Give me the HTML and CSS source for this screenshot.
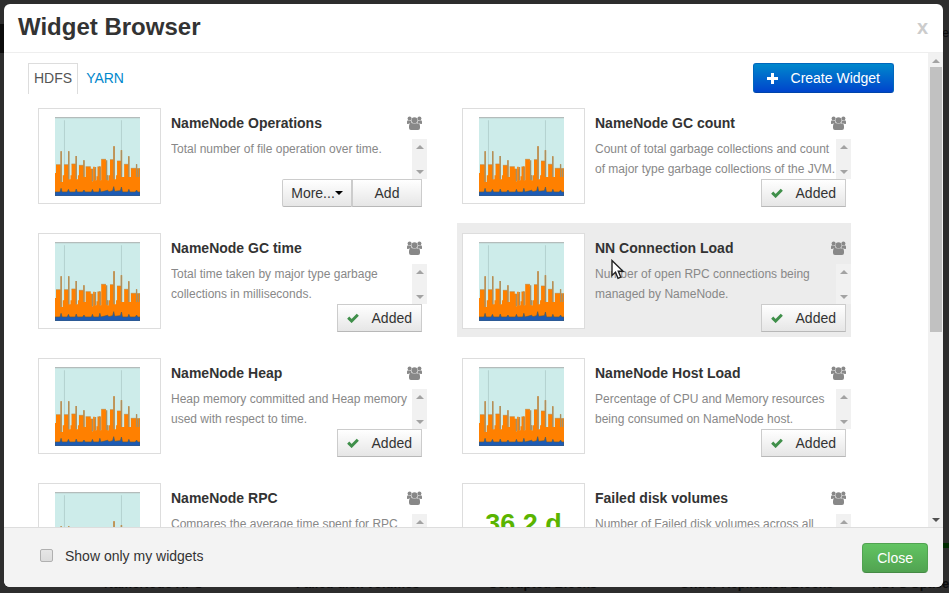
FILE: index.html
```
<!DOCTYPE html>
<html lang="en">
<head>
<meta charset="utf-8">
<title>Widget Browser</title>
<link rel="stylesheet" href="styles.css">
</head>
<body>
<svg class="defs" aria-hidden="true">
  <symbol id="chart" viewBox="0 0 252 237" preserveAspectRatio="none">
    <rect width="252" height="237" fill="#cdecea"/>
    <path d="M0 2H252" stroke="#b4bcbb" stroke-width="4"/>
    <path d="M28 10V237M197 10V237" stroke="#b4d2d0" stroke-width="3"/>
    <path d="M0 237V168H3V143H17V103H20V195H23V175H27V143H39V103H42V187H46V175H49V141H61V117H64V187H68V175H71V145H84V130H87V180H91V149H106V155H110V193H113V149H118V155H120V190H123V178H126V150H131V148H135V190H137V127H151V135H154V175H156V190H160V175H163V128H173V88H177V187H181V175H184V132H195V100H199V180H205V142H217V118H220V180H225V154H240V142H243V154H246V180H248V154H252V237Z" fill="#ff8000"/>
    <path d="M3 143H17M27 143H39M49 141H61M71 145H84M91 149H106M126 149H135M137 127H151M163 128H173M184 132H195M205 142H217M225 154H240" stroke="#c08a45" stroke-width="2"/>
    <path d="M18 103V195M41 103V187M63 117V187M86 130V180M111 155V193M120 150V190M134 150V190M153 130V188M157 175V190M175 88V187M197 100V180M219 118V180M242 142V180M248 154V180" stroke="#a88f62" stroke-width="4"/>
    <path d="M0 237V225H15L18 214L21 225H36L40 217L43 225H60L63 216L66 225H82L86 219L89 225H108L111 217L114 225H130L133 214L136 225L156 220L160 224L171 221L174 209L177 223L194 221L197 210L200 225H216L219 217L222 225H238L242 219L245 225H252V237Z" fill="#1d5bb5" stroke="#4d5c5c" stroke-width="2"/>
  </symbol>
  <symbol id="users" viewBox="0 0 15 14">
    <g fill="#888"><circle cx="2.6" cy="2.4" r="2"/><circle cx="12.4" cy="2.4" r="2"/><circle cx="7.5" cy="4.3" r="3"/>
    <path d="M0 7.4V5.8Q0 4.2 1.1 4.2Q2.4 5 4.2 4.4Q3.9 6 5 7.4H2.3Q1.6 7.6 1.3 8.1Q0 8.1 0 7.4ZM15 7.4V5.8Q15 4.2 13.9 4.2Q12.6 5 10.8 4.4Q11.1 6 10 7.4H12.7Q13.4 7.6 13.7 8.1Q15 8.1 15 7.4ZM2 12V10.5Q2 7.4 4.3 7.1Q7.5 8 10.7 7.1Q13 7.4 13 10.5V12Q13 14 11 14H4Q2 14 2 12Z"/></g>
  </symbol>
  <symbol id="check" viewBox="0 0 12 10">
    <path d="M1.2 4.7L4.6 8L10.8 1.8" fill="none" stroke="#3f8f4a" stroke-width="3"/>
  </symbol>
</svg>

<div class="page" aria-hidden="true">
  <span class="navbar"></span>
  <span class="status"></span>
  <span class="menu">e</span>
  <div class="tiles"><b>NameNode RPC</b><b>Failed disk volumes</b><b>Corrupted Blocks</b><b>Under Replicated Blocks</b><b>HDFS Space</b></div>
</div>

<main class="modal" role="dialog" aria-labelledby="title">
  <header class="modal-header">
    <h1 id="title">Widget Browser</h1>
    <button class="dismiss" type="button">x</button>
  </header>
  <div class="modal-body">
    <div class="content">
      <div class="toolbar">
        <nav class="tabs"><a class="active" href="#hdfs">HDFS</a><a href="#yarn">YARN</a></nav>
        <button class="btn primary" type="button"><svg width="11" height="11" viewBox="0 0 11 11"><path d="M5.5 0V11M0 5.5H11" stroke="#fff" stroke-width="3"/></svg>Create Widget</button>
      </div>
      <div class="cards">
        <article class="card">
          <div class="thumb"><svg><use href="#chart"/></svg></div>
          <div class="info">
            <div class="heading"><h2>NameNode Operations</h2><svg><use href="#users"/></svg></div>
            <div class="desc"><p>Total number of file operation over time.</p><span class="bar"></span></div>
            <div class="actions"><button class="btn more" type="button">More...<i class="caret"></i></button><button class="btn add" type="button">Add</button></div>
          </div>
        </article>
        <article class="card">
          <div class="thumb"><svg><use href="#chart"/></svg></div>
          <div class="info">
            <div class="heading"><h2>NameNode GC count</h2><svg><use href="#users"/></svg></div>
            <div class="desc"><p>Count of total garbage collections and count of major type garbage collections of the JVM.</p><span class="bar"></span></div>
            <div class="actions"><button class="btn" type="button"><svg><use href="#check"/></svg>Added</button></div>
          </div>
        </article>
        <article class="card">
          <div class="thumb"><svg><use href="#chart"/></svg></div>
          <div class="info">
            <div class="heading"><h2>NameNode GC time</h2><svg><use href="#users"/></svg></div>
            <div class="desc"><p>Total time taken by major type garbage collections in milliseconds.</p><span class="bar"></span></div>
            <div class="actions"><button class="btn" type="button"><svg><use href="#check"/></svg>Added</button></div>
          </div>
        </article>
        <article class="card hovered">
          <div class="thumb"><svg><use href="#chart"/></svg></div>
          <div class="info">
            <div class="heading"><h2>NN Connection Load</h2><svg><use href="#users"/></svg></div>
            <div class="desc"><p>Number of open RPC connections being managed by NameNode.</p><span class="bar"></span></div>
            <div class="actions"><button class="btn" type="button"><svg><use href="#check"/></svg>Added</button></div>
          </div>
          <svg class="pointer" viewBox="0 0 14 21"><path d="M1 1.5V16.5L4.5 13.3L7 19.3L9.8 18.1L7.3 12.3H12Z" fill="#fff" stroke="#222" stroke-width="1.4"/></svg>
        </article>
        <article class="card">
          <div class="thumb"><svg><use href="#chart"/></svg></div>
          <div class="info">
            <div class="heading"><h2>NameNode Heap</h2><svg><use href="#users"/></svg></div>
            <div class="desc"><p>Heap memory committed and Heap memory used with respect to time.</p><span class="bar"></span></div>
            <div class="actions"><button class="btn" type="button"><svg><use href="#check"/></svg>Added</button></div>
          </div>
        </article>
        <article class="card">
          <div class="thumb"><svg><use href="#chart"/></svg></div>
          <div class="info">
            <div class="heading"><h2>NameNode Host Load</h2><svg><use href="#users"/></svg></div>
            <div class="desc"><p>Percentage of CPU and Memory resources being consumed on NameNode host.</p><span class="bar"></span></div>
            <div class="actions"><button class="btn" type="button"><svg><use href="#check"/></svg>Added</button></div>
          </div>
        </article>
        <article class="card">
          <div class="thumb"><svg><use href="#chart"/></svg></div>
          <div class="info">
            <div class="heading"><h2>NameNode RPC</h2><svg><use href="#users"/></svg></div>
            <div class="desc"><p>Compares the average time spent for RPC</p><span class="bar"></span></div>
          </div>
        </article>
        <article class="card">
          <div class="thumb"><strong>36.2 d</strong></div>
          <div class="info">
            <div class="heading"><h2>Failed disk volumes</h2><svg><use href="#users"/></svg></div>
            <div class="desc"><p>Number of Failed disk volumes across all</p><span class="bar"></span></div>
          </div>
        </article>
      </div>
    </div>
    <div class="scroll"><span class="thumbbar"></span></div>
  </div>
  <footer class="modal-footer">
    <label><input type="checkbox">Show only my widgets</label>
    <button class="btn success" type="button">Close</button>
  </footer>
</main>
</body>
</html>
```
FILE: styles.css
```
* { box-sizing: border-box; }
body {
  margin: 0;
  height: 100vh;
  padding: 4px 6px 6px 4px;
  background: #2d2d2d;
  color: #333;
  font: 14px/20px "Liberation Sans", Arial, sans-serif;
  overflow: hidden;
}
h1, h2, p { margin: 0; }
button { font: inherit; color: inherit; cursor: pointer; }
.defs { position: absolute; width: 0; height: 0; }

.page { position: absolute; inset: 0; overflow: hidden; }
.navbar { position: absolute; left: 0; top: 24px; width: 4px; height: 29px; background: #0c0c0c; }
.status { position: absolute; right: 0; bottom: 45px; width: 7px; height: 5px; background: #002c00; }
.menu { position: absolute; right: 0; top: 23px; color: #0b0b0b; font-size: 12px; }
.tiles {
  position: absolute;
  left: 104px;
  bottom: -1px;
  display: grid;
  grid-template-columns: repeat(5, 192px);
  color: #0b0b0b;
  font-size: 13px;
  white-space: nowrap;
}

.modal {
  position: relative;
  display: flex;
  flex-direction: column;
  height: 100%;
  background: #fff;
  border-radius: 6px;
  overflow: hidden;
}
.modal-header {
  display: flex;
  flex: none;
  justify-content: space-between;
  height: 49px;
  padding: 3px 15px 6px 14px;
  border-bottom: 1px solid #eee;
}
h1 { font-size: 24px; line-height: 40px; }
.dismiss {
  padding: 0;
  border: 0;
  background: none;
  color: #ccc;
  font-size: 20px;
  font-weight: bold;
}

.modal-body { display: flex; flex: 1; min-height: 0; }
.content { flex: 1; padding: 10px 34px 0 24px; overflow: hidden; }
.toolbar { display: flex; justify-content: space-between; height: 35px; }
.tabs { display: flex; gap: 2px; }
.tabs a {
  height: 31px;
  padding: 4px 5px 0;
  border: 1px solid transparent;
  border-bottom: 0;
  color: #0088cc;
  text-decoration: none;
}
.tabs .active { border-color: #ddd; color: #555; }

.btn {
  display: flex;
  align-items: center;
  justify-content: center;
  height: 28px;
  padding: 0 9px;
  border: 1px solid #ccc;
  border-bottom-color: #b8b8b8;
  background: linear-gradient(#fff, #e6e6e6);
}
.btn svg { width: 12px; height: 10px; margin-right: 13px; }
.primary {
  height: 30px;
  padding: 0 13px;
  border-color: #0067bd #0067bd #0044aa;
  border-radius: 3px;
  background: linear-gradient(#0088cc, #0044cc);
  color: #fff;
}
.primary svg { width: 11px; height: 11px; }
.success {
  height: 30px;
  padding: 0 14px;
  border-color: #51a351 #51a351 #458a45;
  border-radius: 4px;
  background: linear-gradient(#62c462, #51a351);
  color: #fff;
}

.cards {
  display: grid;
  grid-template-columns: 1fr 1fr;
  gap: 11px 30px;
  margin: 0 43px 0 5px;
}
.card { position: relative; display: flex; gap: 10px; padding: 10px 0 8px 5px; }
.hovered { background: #ececec; }
.thumb {
  flex: none;
  width: 123px;
  height: 96px;
  padding: 8px 16px;
  border: 1px solid #ddd;
  background: #fff;
  text-align: center;
}
.thumb svg { display: block; width: 85px; height: 79px; }
.thumb strong { color: #5ab400; font-size: 27px; line-height: 64px; white-space: nowrap; }
.info { flex: 1; min-width: 0; }
.heading {
  display: flex;
  align-items: center;
  justify-content: space-between;
  height: 31px;
  padding: 0 5px 2px 0;
}
h2 { font-size: 14px; line-height: 20px; }
.heading svg { width: 15px; height: 14px; }
.desc { display: flex; height: 40px; color: #888; font-size: 12px; overflow: hidden; }
.desc p { flex: 1; min-width: 0; }
.bar, .scroll { position: relative; flex: none; width: 15px; background: #f1f1f1; }
.bar::before, .bar::after, .scroll::before, .scroll::after {
  content: "";
  position: absolute;
  left: 4px;
  top: 6px;
  border: 4px solid transparent;
  border-top: 0;
  border-bottom-color: #a3a3a3;
}
.bar::after, .scroll::after {
  top: auto;
  bottom: 5px;
  border-top: 4px solid #a3a3a3;
  border-bottom: 0;
}
.scroll::after { border-top-color: #505050; }
.thumbbar {
  position: absolute;
  left: 2px;
  right: 1px;
  top: 14px;
  height: 56%;
  background: #c1c1c1;
}
.actions { display: flex; justify-content: flex-end; height: 25px; padding-right: 5px; }
.more, .add { width: 70px; }
.more { border-radius: 2px 0 0 2px; }
.caret { border: 4px solid transparent; border-top-color: #000; border-bottom: 0; }
.pointer { position: absolute; left: 154px; top: 36px; width: 14px; height: 21px; }

.modal-footer {
  display: flex;
  flex: none;
  align-items: flex-start;
  justify-content: space-between;
  height: 60px;
  padding: 15px 15px 0 36px;
  border-top: 1px solid #ddd;
  background: #f3f3f3;
}
.modal-footer label { display: flex; align-items: center; gap: 12px; height: 25px; }
.modal-footer input {
  appearance: none;
  width: 13px;
  height: 13px;
  margin: 0;
  border: 1px solid #b0b0b0;
  border-radius: 2px;
  background: linear-gradient(#e6e6e6, #dcdcdc);
}
```
